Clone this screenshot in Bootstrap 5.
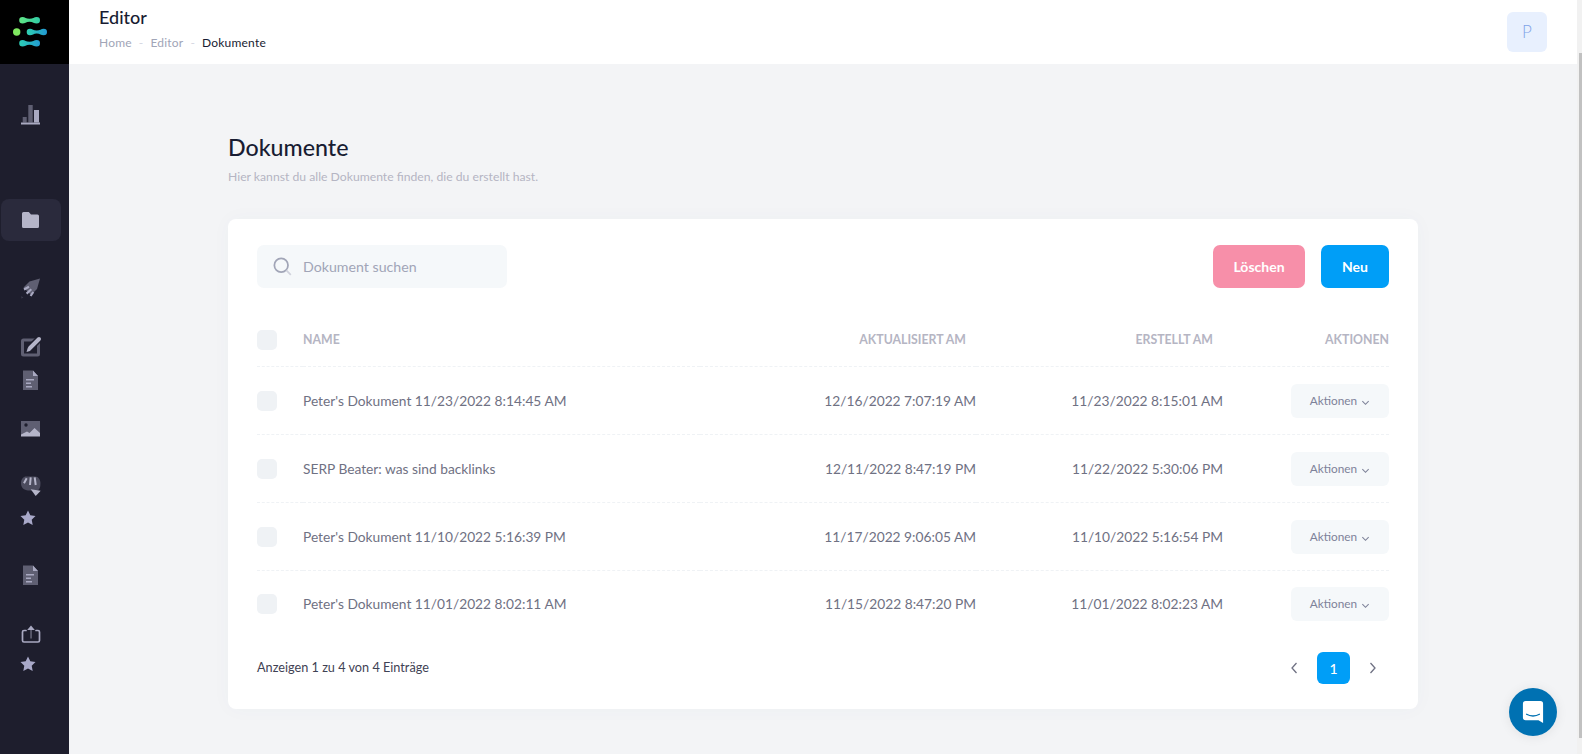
<!DOCTYPE html>
<html lang="de">
<head>
  <meta charset="utf-8">
  <meta name="viewport" content="width=device-width, initial-scale=1">
  <title>Dokumente</title>
  <link href="https://cdn.jsdelivr.net/npm/bootstrap@5.3.3/dist/css/bootstrap.min.css" rel="stylesheet">
  <script src="https://cdn.jsdelivr.net/npm/bootstrap@5.3.3/dist/js/bootstrap.bundle.min.js"></script>
  <style>
    html, body { height: 100%; overflow: hidden; }
    body { font-family: "Lato", "Liberation Sans", sans-serif; background: #f3f4f6; color: #181c32; }
    .app-shell { height: 754px; }
    .side-rail { width: 69px; background: #1e1e2d; flex: none; z-index: 2; }
    .logo-box { height: 64px; background: #000; padding-left: 13px; }
    .rail-item { width: 24px; height: 24px; margin-left: 18px; }
    .rail-item svg { display: block; width: 24px; height: 24px; }
    .rail-active { width: 60px; height: 42px; margin-left: 1px; margin-top: 72px; background: #2a2a3c; border-radius: 8px; padding: 9px 0 0 17px; }
    .rail-active svg { display: block; width: 24px; height: 24px; }
    .m39 { margin-top: 39px; } .m36 { margin-top: 36px; } .m34 { margin-top: 34px; } .m9 { margin-top: 9px; }
    .m24 { margin-top: 24px; } .m8 { margin-top: 8px; } .m33 { margin-top: 33px; } .m35 { margin-top: 35px; } .m6 { margin-top: 6px; }
    .top-head { height: 64px; background: #fff; padding: 0 30px 0 30px; flex: none; }
    .head-text { padding-bottom: 8px; }
    .head-title { font-size: 18px; font-weight: 500; line-height: 22px; color: #181c32; margin: 0; }
    .crumbs { font-size: 12px; letter-spacing: .2px; color: #a1a5b7; margin-top: 7px; line-height: 16px; }
    .crumbs i { font-style: normal; color: #d5d7e2; margin: 0 7px; }
    .crumbs b { font-weight: 400; color: #181c32; }
    .avatar-box { width: 40px; height: 40px; border-radius: 6px; background: #e8f0fe; color: #7fa3e8; font-size: 17px; font-weight: 300; }
    .doc-wrap { width: 1190px; margin-left: 159px; padding-top: 68px; }
    .doc-title { font-size: 23.2px; font-weight: 500; line-height: 30px; margin: 0; color: #181c32; }
    .doc-sub { font-size: 12.2px; line-height: 16px; color: #b5b5c3; margin-top: 7px; }
    .doc-panel { background: #fff; border-radius: 8px; margin-top: 34px; height: 490px; padding: 26px 29px 0; box-shadow: 0 0 20px rgba(76,87,125,.03); }
    .search-box { width: 250px; height: 43px; background: #f5f8fa; border-radius: 7px; padding-left: 15px; gap: 10px; color: #a1a5b7; font-size: 14.2px; }
    .search-box svg { width: 21px; height: 21px; flex: none; }
    .act-btn { height: 43px; border-radius: 7px; color: #fff; font-size: 14px; font-weight: 700; border: 0; padding: 0; }
    .act-del { width: 92px; background: #f78fa9; }
    .act-new { width: 68px; background: #009ef7; }
    .doc-table { table-layout: fixed; width: 1132px; margin: 26px 0 0; border-collapse: collapse; }
    .doc-table th, .doc-table td { padding: 0; border-bottom: 1px dashed #eff2f5; vertical-align: middle; }
    .doc-table tr:last-child td { border-bottom: 0; padding-top: 0; }
    .doc-table th { height: 52px; font-size: 12.3px; font-weight: 700; color: #b5b5c3; text-transform: uppercase; }
    .doc-table td { height: 68px; font-size: 13.75px; color: #6f7183; padding-top: 2px; }
    .col-check { width: 46px; } .col-date { width: 276px; } .col-made { width: 247px; } .col-act { width: 166px; }
    .head-pad { padding-right: 10px !important; }
    .tick-box { display: block; width: 20px; height: 20px; border-radius: 5px; background: #eff2f5; }
    .row-btn { width: 98px; height: 34px; background: #f5f8fa; border: 0; border-radius: 6px; font-size: 11.8px; color: #7e8299; padding: 0; }
    .row-btn svg { width: 9px; height: 9px; margin-left: 1px; }
    .foot-line { margin-top: 14px; font-size: 12.7px; color: #3f4254; height: 32px; }
    .page-one { width: 33px; height: 32px; background: #009ef7; color: #fff; border-radius: 6px; font-size: 14px; font-weight: 500; }
    .page-arrow { width: 10px; height: 14px; display: block; }
    .page-set { gap: 18px; margin-right: 11px; }
    .scroll-track { width: 5px; flex: none; background: #f1f1f1; }
    .scroll-thumb { width: 3px; height: 685px; margin: 53px 0 0 2px; background: #c1c1c1; }
    .chat-bubble { position: fixed; left: 1509px; top: 688px; width: 48px; height: 48px; border-radius: 50%; background: #0071b2; box-shadow: 0 1px 12px rgba(0,0,0,.08); }
    .chat-bubble svg { width: 22px; height: 24px; }
  </style>
</head>
<body>
<div class="d-flex app-shell">
  <!-- sidebar -->
  <aside class="side-rail">
    <div class="logo-box d-flex align-items-center">
      <svg width="34" height="30" viewBox="0 0 34 30">
        <defs>
          <linearGradient id="lgTop" gradientUnits="userSpaceOnUse" x1="6" y1="0" x2="27" y2="0"><stop offset="0" stop-color="#62e584"/><stop offset="1" stop-color="#30cca8"/></linearGradient>
          <linearGradient id="lgMid" gradientUnits="userSpaceOnUse" x1="14" y1="0" x2="34" y2="0"><stop offset="0" stop-color="#2fd0b0"/><stop offset="1" stop-color="#2298d4"/></linearGradient>
          <linearGradient id="lgBot" gradientUnits="userSpaceOnUse" x1="6" y1="0" x2="27" y2="0"><stop offset="0" stop-color="#2ccdb4"/><stop offset="1" stop-color="#229cd2"/></linearGradient>
        </defs>
        <path fill="url(#lgTop)" d="M9.500 0c2.500 0 3.500 1.800 7 1.800S21 0 23.700 0a3.300 3.300 0 0 1 0 6.600c-2.700 0-3.700-1.800-7.200-1.800s-4.500 1.800-7 1.800a3.300 3.300 0 0 1 0-6.600z"/>
        <circle cx="3.700" cy="15" r="3.700" fill="#7fe860"/>
        <path fill="url(#lgMid)" d="M17 11.700c2.500 0 3.500 1.800 6.700 1.800s4.500-1.800 7-1.800a3.300 3.300 0 0 1 0 6.600c-2.500 0-3.800-1.800-7-1.800s-4.200 1.800-6.700 1.800a3.300 3.300 0 0 1 0-6.600z"/>
        <path fill="url(#lgBot)" d="M9.500 23c2.500 0 3.500 1.800 7 1.800s4.500-1.800 7.200-1.800a3.300 3.300 0 0 1 0 6.600c-2.700 0-3.700-1.800-7.200-1.800s-4.500 1.800-7 1.800a3.300 3.300 0 0 1 0-6.600z"/>
      </svg>
    </div>
    <div class="rail-item m39"><svg viewBox="0 0 24 24"><rect x="4.700" y="14" width="4" height="5.500" fill="#5f5f72"/><rect x="10.300" y="2" width="4.400" height="17.500" fill="#5f5f72"/><rect x="16" y="7" width="5" height="12.500" fill="#a9a9c1"/><rect x="3" y="19.500" width="19" height="2" fill="#a9a9c1"/></svg></div>
    <div class="rail-active"><svg viewBox="0 0 24 24"><path fill="#b5b5c9" d="M4 8.500V5.500A1.500 1.500 0 0 1 5.500 4h5.300l2.200 2.500h6.500A1.500 1.500 0 0 1 21 8v10.500a1.500 1.500 0 0 1-1.500 1.500h-14A1.500 1.500 0 0 1 4 18.500z"/></svg></div>
    <div class="rail-item m36"><svg viewBox="0 0 24 24"><path fill="#5f5f72" d="M22 1.500L11.500 4.500 5.500 10.500l7.500 7.500 6-6z"/><path fill="none" stroke="#a9a9c1" stroke-width="2.200" d="M6 12.500l5-2.800M8.600 16.600l4.700-4.300M12.600 19l2.700-4"/><path fill="#3f3f50" d="M3.500 19l1.800 1.800-2 .7z"/></svg></div>
    <div class="rail-item m34"><svg viewBox="0 0 24 24"><rect x="4.500" y="5" width="16" height="15" rx="1" fill="none" stroke="#5f5f72" stroke-width="3"/><path d="M10 15L21 4" stroke="#1e1e2d" stroke-width="7"/><path d="M12 13l9-9" stroke="#b5b5c9" stroke-width="4" stroke-linecap="round"/><path fill="#b5b5c9" d="M8.500 17l1.300-4.300 3 3z"/></svg></div>
    <div class="rail-item m9"><svg viewBox="0 0 24 24"><path fill="#5f5f72" d="M5 2.500h10l5 5.500v14H5z"/><path fill="#a9a9c1" d="M15 2.500L20 8h-5zM8 11h8v1.500H8zM8 14.500h5v1.500H8zM8 18h6v1.500H8z"/></svg></div>
    <div class="rail-item m24"><svg viewBox="0 0 24 24"><rect x="3" y="5" width="19" height="15" fill="#5f5f72"/><circle cx="8" cy="9" r="1.700" fill="#1e1e2d"/><path fill="#b5b5c9" d="M3 18.500l6-3 2.500 1.500 5-5 5.500 5v3.500H3z"/></svg></div>
    <div class="rail-item m34"><svg viewBox="0 0 24 24"><path fill="#4c4c5e" d="M8 2.500h9c3.500 0 5.500 3.500 5.500 7s-1 6-3 7H10C6 16 3 14 3 9c0-4 2.500-6.500 5-6.500z"/><path fill="none" stroke="#b5b5c9" stroke-width="2" d="M8.700 4.300L6 9.300M12.700 3.300L12 11M16.700 3.300l1 7.700"/><path fill="#b5b5c9" d="M12.700 15.300l10 1.400-5 5.300z"/></svg></div>
    <div class="rail-item m8"><svg viewBox="0 0 24 24"><path fill="#a9a9c9" d="M10 4.500l2.300 4.800 5.200.7-3.800 3.700 1 5.300-4.700-2.500-4.700 2.500 1-5.300L2.500 10l5.200-.7z"/></svg></div>
    <div class="rail-item m33"><svg viewBox="0 0 24 24"><path fill="#5f5f72" d="M5 2.500h10l5 5.500v14H5z"/><path fill="#a9a9c1" d="M15 2.500L20 8h-5zM8 11h8v1.500H8zM8 14.500h5v1.500H8zM8 18h6v1.500H8z"/></svg></div>
    <div class="rail-item m35"><svg viewBox="0 0 24 24"><path fill="none" stroke="#a9a9c1" stroke-width="1.700" stroke-linecap="round" d="M8 8.500H6a1.500 1.500 0 0 0-1.500 1.500v8.500A1.500 1.500 0 0 0 6 20h14a1.500 1.500 0 0 0 1.500-1.500V10A1.500 1.500 0 0 0 20 8.500h-2"/><rect x="12.200" y="7" width="1.700" height="9.500" fill="#5f5f72"/><path fill="#a9a9c1" d="M13 3.500L16.800 8H9.200z"/></svg></div>
    <div class="rail-item m6"><svg viewBox="0 0 24 24"><path fill="#a9a9c9" d="M10 4.500l2.300 4.800 5.200.7-3.800 3.700 1 5.300-4.700-2.500-4.700 2.500 1-5.300L2.500 10l5.200-.7z"/></svg></div>
  </aside>

  <div class="flex-grow-1 d-flex flex-column">
    <!-- header -->
    <header class="top-head d-flex align-items-center justify-content-between">
      <div class="head-text">
        <h1 class="head-title">Editor</h1>
        <div class="crumbs">Home<i>-</i>Editor<i>-</i><b>Dokumente</b></div>
      </div>
      <div class="avatar-box d-flex align-items-center justify-content-center">P</div>
    </header>

    <main class="doc-wrap">
      <h2 class="doc-title">Dokumente</h2>
      <div class="doc-sub">Hier kannst du alle Dokumente finden, die du erstellt hast.</div>

      <div class="doc-panel">
        <div class="d-flex justify-content-between">
          <div class="search-box d-flex align-items-center">
            <svg viewBox="0 0 24 24" fill="none"><circle cx="10.500" cy="10.500" r="7.800" stroke="#a1a5b7" stroke-width="2"/><path d="M16.500 16.500l5 5" stroke="#d0d2dc" stroke-width="2"/></svg>
            <span>Dokument suchen</span>
          </div>
          <div class="d-flex gap-3">
            <button class="act-btn act-del" type="button">Löschen</button>
            <button class="act-btn act-new" type="button">Neu</button>
          </div>
        </div>

        <table class="doc-table">
          <thead>
          <tr>
            <th class="col-check"><span class="tick-box"></span></th>
            <th>Name</th>
            <th class="col-date text-end head-pad">Aktualisiert am</th>
            <th class="col-made text-end head-pad">Erstellt am</th>
            <th class="col-act text-end">Aktionen</th>
          </tr>
          </thead>
          <tbody>
          <tr>
            <td><span class="tick-box"></span></td>
            <td>Peter's Dokument 11/23/2022 8:14:45 AM</td>
            <td class="text-end">12/16/2022 7:07:19 AM</td>
            <td class="text-end">11/23/2022 8:15:01 AM</td>
            <td class="text-end"><button class="row-btn" type="button">Aktionen <svg viewBox="0 0 10 10" fill="none"><path d="M1.500 3.500L5 7l3.500-3.500" stroke="#7e8299" stroke-width="1.200"/></svg></button></td>
          </tr>
          <tr>
            <td><span class="tick-box"></span></td>
            <td>SERP Beater: was sind backlinks</td>
            <td class="text-end">12/11/2022 8:47:19 PM</td>
            <td class="text-end">11/22/2022 5:30:06 PM</td>
            <td class="text-end"><button class="row-btn" type="button">Aktionen <svg viewBox="0 0 10 10" fill="none"><path d="M1.500 3.500L5 7l3.500-3.500" stroke="#7e8299" stroke-width="1.200"/></svg></button></td>
          </tr>
          <tr>
            <td><span class="tick-box"></span></td>
            <td>Peter's Dokument 11/10/2022 5:16:39 PM</td>
            <td class="text-end">11/17/2022 9:06:05 AM</td>
            <td class="text-end">11/10/2022 5:16:54 PM</td>
            <td class="text-end"><button class="row-btn" type="button">Aktionen <svg viewBox="0 0 10 10" fill="none"><path d="M1.500 3.500L5 7l3.500-3.500" stroke="#7e8299" stroke-width="1.200"/></svg></button></td>
          </tr>
          <tr>
            <td><span class="tick-box"></span></td>
            <td>Peter's Dokument 11/01/2022 8:02:11 AM</td>
            <td class="text-end">11/15/2022 8:47:20 PM</td>
            <td class="text-end">11/01/2022 8:02:23 AM</td>
            <td class="text-end"><button class="row-btn" type="button">Aktionen <svg viewBox="0 0 10 10" fill="none"><path d="M1.500 3.500L5 7l3.500-3.500" stroke="#7e8299" stroke-width="1.200"/></svg></button></td>
          </tr>
          </tbody>
        </table>

        <div class="foot-line d-flex align-items-center justify-content-between">
          <span>Anzeigen 1 zu 4 von 4 Einträge</span>
          <div class="d-flex align-items-center page-set">
            <svg class="page-arrow" viewBox="0 0 10 14" fill="none"><path d="M7.500 2L3 7l4.500 5" stroke="#6f7183" stroke-width="1.300"/></svg>
            <div class="page-one d-flex align-items-center justify-content-center">1</div>
            <svg class="page-arrow" viewBox="0 0 10 14" fill="none"><path d="M2.500 2L7 7l-4.500 5" stroke="#6f7183" stroke-width="1.300"/></svg>
          </div>
        </div>
      </div>
    </main>
  </div>

  <div class="scroll-track"><div class="scroll-thumb"></div></div>
</div>

<div class="chat-bubble d-flex align-items-center justify-content-center">
  <svg viewBox="0 0 24 26"><path fill="#fff" d="M4 1h16a3 3 0 0 1 3 3v21l-5-3H4a3 3 0 0 1-3-3V4a3 3 0 0 1 3-3z"/><path fill="none" stroke="#0071b2" stroke-width="1.400" stroke-linecap="round" d="M5 15.500c4 2.500 10 2.500 14 0"/></svg>
</div>
</body>
</html>
